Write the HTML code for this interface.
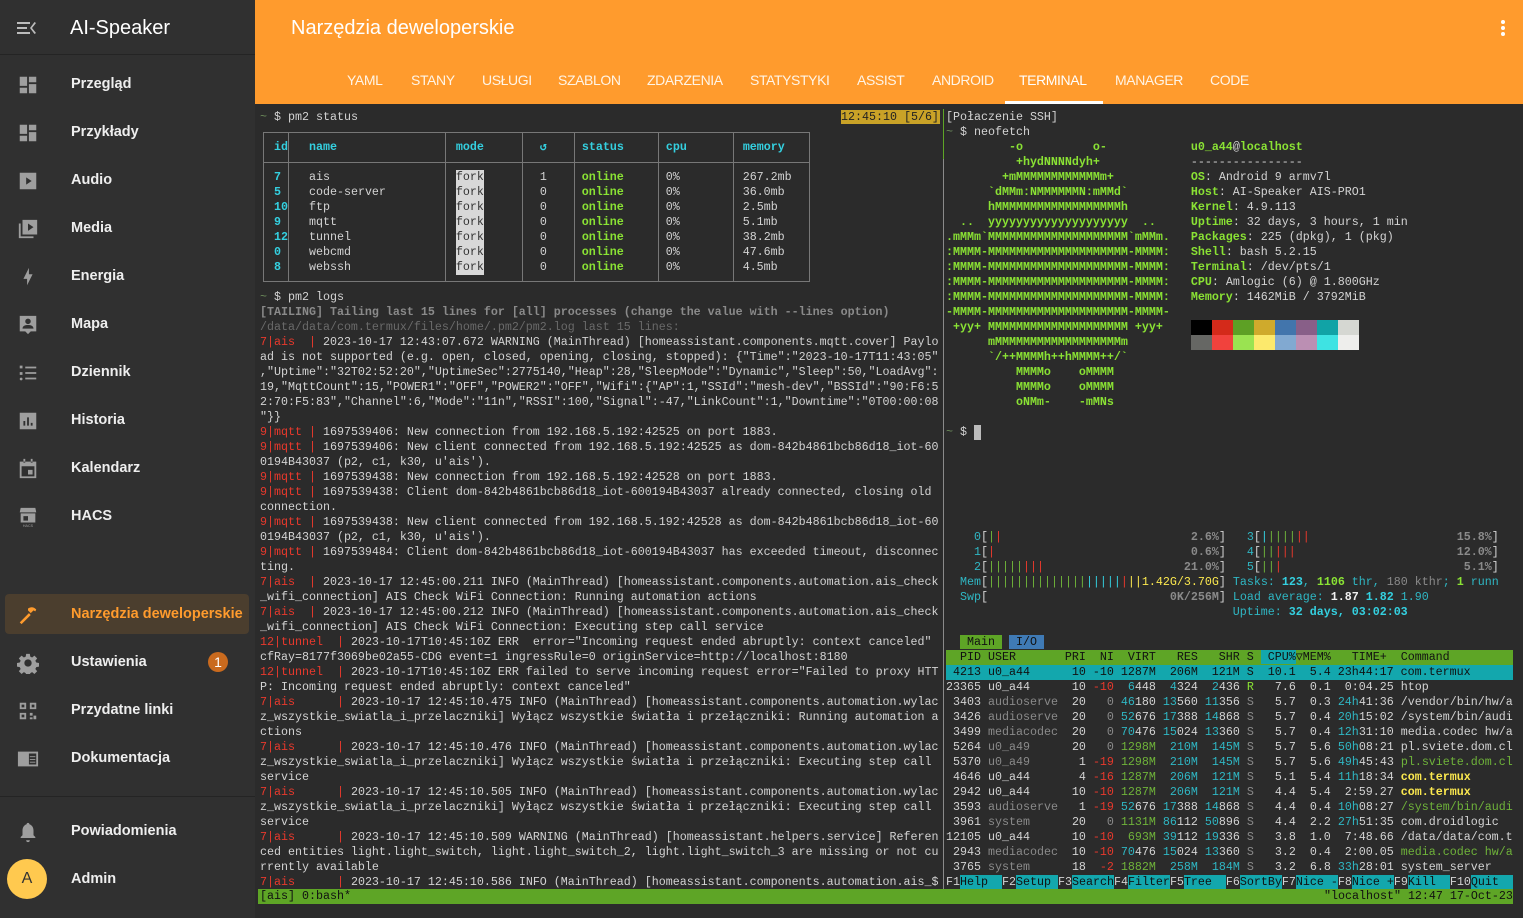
<!DOCTYPE html>
<html><head><meta charset="utf-8">
<style>
*{margin:0;padding:0;box-sizing:border-box}
body{width:1523px;height:918px;overflow:hidden;background:#2b2b2b;font-family:"Liberation Sans",sans-serif;position:relative}
#side{position:absolute;left:0;top:0;width:255px;height:918px;background:#303030}
.si{position:absolute;left:0;width:255px;height:48px}
.si svg{position:absolute;left:17px;top:14px;width:22px;height:22px;fill:#9e9e9e}
.si span{position:absolute;left:71px;top:16px;font-size:14.5px;font-weight:bold;color:#eee}
#hdr{position:absolute;left:255px;top:0;width:1268px;height:104px;background:#ff9b2d}
.tab{position:absolute;top:72px;font-size:14px;color:#fff4e6;letter-spacing:-0.4px}
pre{font-family:"Liberation Mono",monospace;font-size:11.67px;line-height:15px;color:#d3d3d3;position:absolute;white-space:pre;overflow:hidden}
.r{color:#e8392c}.g{color:#8ae234}.c{color:#34d0e0}.y{color:#fce94f;font-weight:bold}.d{color:#8a8a8a}.dd{color:#6a6a6a}.b{font-weight:bold}
.t{color:#6b8a5a}.w{color:#f0f0f0}.cy{color:#2fb7c4}.gr{color:#6fb33a}
.fork{display:inline-block;background:#d8d8d8;color:#333;height:15px}
.gb{background:#5ea526;color:#111}.cb{background:#13a7ad;color:#111}.bb{background:#3f7ab5;color:#111}
.full{display:inline-block;width:567px;height:15px;vertical-align:top}
</style></head><body>
<div id="side">
 <svg style="position:absolute;left:17px;top:20px" width="20" height="16" viewBox="0 0 20 16"><path d="M0 2h13v2H0zM0 7h10v2H0zM0 12h13v2H0zM19 3l-4 5 4 5-1.5 1L13 8l4.5-6z" fill="#bbb"/></svg>
 <div style="position:absolute;left:70px;top:17px;font-size:20px;color:#fff">AI-Speaker</div>
 <div style="position:absolute;left:0;top:54px;width:255px;height:1px;background:#242424"></div>
 <div class="si" style="top:60px"><svg viewBox="0 0 24 24"><path d="M3 3h8v10H3zM13 3h8v6h-8zM13 11h8v10h-8zM3 15h8v6H3z"/></svg><span>Przegląd</span></div>
 <div class="si" style="top:108px"><svg viewBox="0 0 24 24"><path d="M3 3h8v10H3zM13 3h8v6h-8zM13 11h8v10h-8zM3 15h8v6H3z"/></svg><span>Przykłady</span></div>
 <div class="si" style="top:156px"><svg viewBox="0 0 24 24"><path d="M3 3h18v18H3z M10 8v8l6-4z" fill-rule="evenodd"/></svg><span>Audio</span></div>
 <div class="si" style="top:204px"><svg viewBox="0 0 24 24"><path d="M2 6h2v14h14v2H2zM6 2h16v16H6zM12 6v8l6-4z" fill-rule="evenodd"/></svg><span>Media</span></div>
 <div class="si" style="top:252px"><svg viewBox="0 0 24 24"><path d="M11 21v-7H7l6-12v7h4z"/></svg><span>Energia</span></div>
 <div class="si" style="top:300px"><svg viewBox="0 0 24 24"><path d="M3 2h18v17h-6l-3 3-3-3H3zM12 5a3 3 0 100 6 3 3 0 000-6zM6 16h12c0-3-3-4-6-4s-6 1-6 4z" fill-rule="evenodd"/></svg><span>Mapa</span></div>
 <div class="si" style="top:348px"><svg viewBox="0 0 24 24"><path d="M3 4h3v3H3zM9 5h12v2H9zM3 11h3v3H3zM9 11h12v2H9zM4.5 17a1.5 1.5 0 110 3 1.5 1.5 0 010-3zM9 17h12v2H9z"/></svg><span>Dziennik</span></div>
 <div class="si" style="top:396px"><svg viewBox="0 0 24 24"><path d="M3 3h18v18H3zM7 12v5h2v-5zM11 8v9h2V8zM15 14v3h2v-3z" fill-rule="evenodd"/></svg><span>Historia</span></div>
 <div class="si" style="top:444px"><svg viewBox="0 0 24 24"><path d="M3 4h18v18H3zM5 9v11h14V9zM7 1h2v4H7zM15 1h2v4h-2zM12 13h5v5h-5z" fill-rule="evenodd"/></svg><span>Kalendarz</span></div>
 <div class="si" style="top:492px"><svg viewBox="0 0 24 24"><path d="M4 2h16l1 5H3zM4 8h16v10H4zM7 11v5h5v-5z" fill-rule="evenodd"/><text x="12" y="23" font-size="4" fill="#9e9e9e" text-anchor="middle" font-family="Liberation Sans">HACS</text></svg><span>HACS</span></div>
 <div style="position:absolute;left:5px;top:594px;width:244px;height:40px;background:#4b3e2e;border-radius:4px"></div>
 <div class="si" style="top:590px"><svg viewBox="0 0 24 24" style="fill:#ff9b2d"><path d="M3 20l10-10 2 2L5 22zM12 5c3-2 6-2 9 1l-1 2-2-1-3 3-3-3z"/></svg><span style="color:#ff9b2d">Narzędzia deweloperskie</span></div>
 <div class="si" style="top:638px"><svg viewBox="0 0 24 24"><path d="M12 8a4 4 0 100 8 4 4 0 000-8zM10 2h4l.5 3 2 1 2.5-2 3 3-2 2.5 1 2 3 .5v4l-3 .5-1 2 2 2.5-3 3-2.5-2-2 1-.5 3h-4l-.5-3-2-1-2.5 2-3-3 2-2.5-1-2-3-.5v-4l3-.5 1-2-2-2.5 3-3 2.5 2 2-1z" fill-rule="evenodd"/></svg><span>Ustawienia</span></div>
 <div style="position:absolute;left:208px;top:652px;width:20px;height:20px;border-radius:50%;background:#c96a1e;color:#fff;font-size:14px;text-align:center;line-height:20px">1</div>
 <div class="si" style="top:686px"><svg viewBox="0 0 24 24"><path d="M3 3h7v7H3zM5 5v3h3V5zM14 3h7v7h-7zM16 5v3h3V5zM3 14h7v7H3zM5 16v3h3v-3zM14 14h3v3h-3zM18 17h3v4h-3zM14 19h3v2h-3z" fill-rule="evenodd"/></svg><span>Przydatne linki</span></div>
 <div class="si" style="top:734px"><svg viewBox="0 0 24 24"><path d="M1 4h22v16H1zM13 6v12h8V6zM14 9h6v1h-6zM14 12h6v1h-6zM14 15h6v1h-6z" fill-rule="evenodd"/></svg><span>Dokumentacja</span></div>
 <div style="position:absolute;left:0;top:796px;width:255px;height:1px;background:#242424"></div>
 <div class="si" style="top:807px"><svg viewBox="0 0 24 24"><path d="M12 2c1 0 1.5.7 1.5 1.5 3 1 4.5 3.5 4.5 7v5l2 2v1H4v-1l2-2v-5c0-3.5 1.5-6 4.5-7C10.5 2.7 11 2 12 2zM10 21h4a2 2 0 01-4 0z"/></svg><span>Powiadomienia</span></div>
 <div style="position:absolute;left:7px;top:859px;width:40px;height:40px;border-radius:50%;background:#ffc94f;color:#333;font-size:16px;text-align:center;line-height:40px">A</div>
 <div class="si" style="top:855px"><span>Admin</span></div>
</div>
<div id="hdr">
 <div style="position:absolute;left:36px;top:17px;font-size:20px;color:#fff">Narzędzia deweloperskie</div>
 <div style="position:absolute;left:1246px;top:20px;width:4px;height:4px;background:#fff;border-radius:2px;box-shadow:0 6px #fff,0 12px #fff"></div>
 <div class="tab" style="left:92px">YAML</div>
 <div class="tab" style="left:156px">STANY</div>
 <div class="tab" style="left:227px">USŁUGI</div>
 <div class="tab" style="left:303px">SZABLON</div>
 <div class="tab" style="left:392px">ZDARZENIA</div>
 <div class="tab" style="left:495px">STATYSTYKI</div>
 <div class="tab" style="left:602px">ASSIST</div>
 <div class="tab" style="left:677px">ANDROID</div>
 <div class="tab" style="left:764px;color:#fff">TERMINAL</div>
 <div class="tab" style="left:860px">MANAGER</div>
 <div class="tab" style="left:955px">CODE</div>
 <div style="position:absolute;left:750px;top:101px;width:98px;height:3px;background:#fff"></div>
</div>

<div style="position:absolute;left:943px;top:109px;width:1px;height:780px;background:#8a8a8a"></div>
<div style="position:absolute;left:943px;top:109px;width:1px;height:50px;background:#5ea526"></div>

<!-- table -->
<div style="position:absolute;left:263px;top:132px;width:547px;height:150px;border:1px solid #777"></div>
<div style="position:absolute;left:263px;top:162px;width:547px;height:1px;background:#777"></div>
<div style="position:absolute;left:288px;top:132px;width:1px;height:150px;background:#777"></div>
<div style="position:absolute;left:445px;top:132px;width:1px;height:150px;background:#777"></div>
<div style="position:absolute;left:522px;top:132px;width:1px;height:150px;background:#777"></div>
<div style="position:absolute;left:574px;top:132px;width:1px;height:150px;background:#777"></div>
<div style="position:absolute;left:658px;top:132px;width:1px;height:150px;background:#777"></div>
<div style="position:absolute;left:733px;top:132px;width:1px;height:150px;background:#777"></div>

<div style="position:absolute;left:841px;top:110px;width:99px;height:14px;background:#c9a227"></div>
<pre style="left:841px;top:110px;color:#222">12:45:10 [5/6]</pre>

<pre style="left:260px;top:110px;width:683px;height:780px"><span class="t">~</span> $ pm2 status

  <span class="c b">id</span>   <span class="c b">name</span>                 <span class="c b">mode</span>        <span class="c b">↺</span>     <span class="c b">status</span>      <span class="c b">cpu</span>        <span class="c b">memory</span>

  <span class="c b">7</span>    ais                  <span class="fork">fork</span>        1     <span class="g b">online</span>      0%         267.2mb
  <span class="c b">5</span>    code-server          <span class="fork">fork</span>        0     <span class="g b">online</span>      0%         36.0mb
  <span class="c b">10</span>   ftp                  <span class="fork">fork</span>        0     <span class="g b">online</span>      0%         2.5mb
  <span class="c b">9</span>    mqtt                 <span class="fork">fork</span>        0     <span class="g b">online</span>      0%         5.1mb
  <span class="c b">12</span>   tunnel               <span class="fork">fork</span>        0     <span class="g b">online</span>      0%         38.2mb
  <span class="c b">0</span>    webcmd               <span class="fork">fork</span>        0     <span class="g b">online</span>      0%         47.6mb
  <span class="c b">8</span>    webssh               <span class="fork">fork</span>        0     <span class="g b">online</span>      0%         4.5mb

<span class="t">~</span> $ pm2 logs
<span class="d b">[TAILING] Tailing last 15 lines for [all] processes (change the value with --lines option)</span>
<span class="dd">/data/data/com.termux/files/home/.pm2/pm2.log last 15 lines:</span>
<span class="r">7|ais  |</span> 2023-10-17 12:43:07.672 WARNING (MainThread) [homeassistant.components.mqtt.cover] Paylo
ad is not supported (e.g. open, closed, opening, closing, stopped): {"Time":"2023-10-17T11:43:05"
,"Uptime":"32T02:52:20","UptimeSec":2775140,"Heap":28,"SleepMode":"Dynamic","Sleep":50,"LoadAvg":
19,"MqttCount":15,"POWER1":"OFF","POWER2":"OFF","Wifi":{"AP":1,"SSId":"mesh-dev","BSSId":"90:F6:5
2:70:F5:83","Channel":6,"Mode":"11n","RSSI":100,"Signal":-47,"LinkCount":1,"Downtime":"0T00:00:08
"}}
<span class="r">9|mqtt |</span> 1697539406: New connection from 192.168.5.192:42525 on port 1883.
<span class="r">9|mqtt |</span> 1697539406: New client connected from 192.168.5.192:42525 as dom-842b4861bcb86d18_iot-60
0194B43037 (p2, c1, k30, u'ais').
<span class="r">9|mqtt |</span> 1697539438: New connection from 192.168.5.192:42528 on port 1883.
<span class="r">9|mqtt |</span> 1697539438: Client dom-842b4861bcb86d18_iot-600194B43037 already connected, closing old
connection.
<span class="r">9|mqtt |</span> 1697539438: New client connected from 192.168.5.192:42528 as dom-842b4861bcb86d18_iot-60
0194B43037 (p2, c1, k30, u'ais').
<span class="r">9|mqtt |</span> 1697539484: Client dom-842b4861bcb86d18_iot-600194B43037 has exceeded timeout, disconnec
ting.
<span class="r">7|ais  |</span> 2023-10-17 12:45:00.211 INFO (MainThread) [homeassistant.components.automation.ais_check
_wifi_connection] AIS Check WiFi Connection: Running automation actions
<span class="r">7|ais  |</span> 2023-10-17 12:45:00.212 INFO (MainThread) [homeassistant.components.automation.ais_check
_wifi_connection] AIS Check WiFi Connection: Executing step call service
<span class="r">12|tunnel  |</span> 2023-10-17T10:45:10Z ERR  error="Incoming request ended abruptly: context canceled"
cfRay=8177f3069be02a55-CDG event=1 ingressRule=0 originService=http://localhost:8180
<span class="r">12|tunnel  |</span> 2023-10-17T10:45:10Z ERR failed to serve incoming request error="Failed to proxy HTT
P: Incoming request ended abruptly: context canceled"
<span class="r">7|ais      |</span> 2023-10-17 12:45:10.475 INFO (MainThread) [homeassistant.components.automation.wylac
z_wszystkie_swiatla_i_przelaczniki] Wyłącz wszystkie światła i przełączniki: Running automation a
ctions
<span class="r">7|ais      |</span> 2023-10-17 12:45:10.476 INFO (MainThread) [homeassistant.components.automation.wylac
z_wszystkie_swiatla_i_przelaczniki] Wyłącz wszystkie światła i przełączniki: Executing step call
service
<span class="r">7|ais      |</span> 2023-10-17 12:45:10.505 INFO (MainThread) [homeassistant.components.automation.wylac
z_wszystkie_swiatla_i_przelaczniki] Wyłącz wszystkie światła i przełączniki: Executing step call
service
<span class="r">7|ais      |</span> 2023-10-17 12:45:10.509 WARNING (MainThread) [homeassistant.helpers.service] Referen
ced entities light.light_switch, light.light_switch_2, light.light_switch_3 are missing or not cu
rrently available
<span class="r">7|ais      |</span> 2023-10-17 12:45:10.586 INFO (MainThread) [homeassistant.components.automation.ais_$</pre>

<!-- color blocks -->
<div style="position:absolute;left:1191px;top:320px;display:flex">
<div style="width:21px;height:15px;background:#000"></div><div style="width:21px;height:15px;background:#d42a1a"></div><div style="width:21px;height:15px;background:#5da025"></div><div style="width:21px;height:15px;background:#cfaa2c"></div><div style="width:21px;height:15px;background:#4275ac"></div><div style="width:21px;height:15px;background:#885f88"></div><div style="width:21px;height:15px;background:#11a3a6"></div><div style="width:21px;height:15px;background:#d5d7d2"></div></div>
<div style="position:absolute;left:1191px;top:335px;display:flex">
<div style="width:21px;height:15px;background:#666764"></div><div style="width:21px;height:15px;background:#f1423d"></div><div style="width:21px;height:15px;background:#9ae351"></div><div style="width:21px;height:15px;background:#fce96c"></div><div style="width:21px;height:15px;background:#81a9d1"></div><div style="width:21px;height:15px;background:#bb8fb3"></div><div style="width:21px;height:15px;background:#3ee3e3"></div><div style="width:21px;height:15px;background:#eeeeec"></div></div>

<div style="position:absolute;left:974px;top:425px;width:7px;height:15px;background:#bbb"></div>

<pre style="left:946px;top:110px;width:577px;height:780px">[Połaczenie SSH]
<span class="t">~</span> $ neofetch
<span class="g b">         -o          o-            </span><span class="g b">u0_a44</span>@<span class="g b">localhost</span>
<span class="g b">          +hydNNNNdyh+             </span>----------------
<span class="g b">        +mMMMMMMMMMMMMm+           </span><span class="g b">OS</span>: Android 9 armv7l
<span class="g b">      `dMMm:NMMMMMMN:mMMd`         </span><span class="g b">Host</span>: AI-Speaker AIS-PRO1
<span class="g b">      hMMMMMMMMMMMMMMMMMMh         </span><span class="g b">Kernel</span>: 4.9.113
<span class="g b">  ..  yyyyyyyyyyyyyyyyyyyy  ..     </span><span class="g b">Uptime</span>: 32 days, 3 hours, 1 min
<span class="g b">.mMMm`MMMMMMMMMMMMMMMMMMMM`mMMm.   </span><span class="g b">Packages</span>: 225 (dpkg), 1 (pkg)
<span class="g b">:MMMM-MMMMMMMMMMMMMMMMMMMM-MMMM:   </span><span class="g b">Shell</span>: bash 5.2.15
<span class="g b">:MMMM-MMMMMMMMMMMMMMMMMMMM-MMMM:   </span><span class="g b">Terminal</span>: /dev/pts/1
<span class="g b">:MMMM-MMMMMMMMMMMMMMMMMMMM-MMMM:   </span><span class="g b">CPU</span>: Amlogic (6) @ 1.800GHz
<span class="g b">:MMMM-MMMMMMMMMMMMMMMMMMMM-MMMM:   </span><span class="g b">Memory</span>: 1462MiB / 3792MiB
<span class="g b">-MMMM-MMMMMMMMMMMMMMMMMMMM-MMMM-</span>
<span class="g b"> +yy+ MMMMMMMMMMMMMMMMMMMM +yy+</span>
<span class="g b">      mMMMMMMMMMMMMMMMMMMm</span>
<span class="g b">      `/++MMMMh++hMMMM++/`</span>
<span class="g b">          MMMMo    oMMMM</span>
<span class="g b">          MMMMo    oMMMM</span>
<span class="g b">          oNMm-    -mMNs</span>

<span class="t">~</span> $






    <span class="cy">0</span>[<span class="gr">|</span><span class="r">|</span>                           <span class="d b">2.6%</span>]   <span class="cy">3</span>[<span class="c">|</span><span class="gr">||||</span><span class="r">||</span>                     <span class="d b">15.8%</span>]
    <span class="cy">1</span>[<span class="r">|</span>                            <span class="d b">0.6%</span>]   <span class="cy">4</span>[<span class="gr">||</span><span class="r">|||</span>                       <span class="d b">12.0%</span>]
    <span class="cy">2</span>[<span class="gr">|||||</span><span class="r">|||</span>                    <span class="d b">21.0%</span>]   <span class="cy">5</span>[<span class="gr">||</span><span class="r">|</span>                          <span class="d b">5.1%</span>]
  <span class="cy">Mem</span>[<span class="gr">||||||||||||||</span><span class="c">|||||</span><span class="r">|</span><span class="y" style="font-weight:normal">||1.42G/3.70G</span>] <span class="cy">Tasks: </span><span class="c b">123</span><span class="cy">, </span><span class="g b">1106</span><span class="cy"> thr, </span><span class="d">180 kthr</span><span class="cy">; </span><span class="g b">1</span><span class="cy"> runn</span>
  <span class="cy">Swp</span>[                          <span class="d b">0K/256M</span>] <span class="cy">Load average: </span><span class="w b">1.87 </span><span class="c b">1.82 </span><span class="cy">1.90</span>
                                         <span class="cy">Uptime: </span><span class="c b">32 days, 03:02:03</span>

  <span class="gb"> Main </span> <span class="bb"> I/O </span>
<span class="full gb">  PID USER       PRI  NI  VIRT   RES   SHR S <span class="cb"> CPU%</span>▽MEM%   TIME+  Command</span>
<span class="full cb"> 4213 u0_a44      10 -10 1287M  206M  121M S  10.1  5.4 23h44:17 com.termux</span>
23365 u0_a44      10 <span class="r">-10</span>  <span class="cy">6</span>448  <span class="cy">4</span>324  <span class="cy">2</span>436 <span class="g">R</span>   7.6  0.1  0:04.25 htop
 3403 <span class="d">audioserve</span>  20   <span class="d">0</span> <span class="cy">46</span>180 <span class="cy">13</span>560 <span class="cy">11</span>356 <span class="d">S</span>   5.7  0.3 <span class="cy">24h</span>41:36 /vendor/bin/hw/a
 3426 <span class="d">audioserve</span>  20   <span class="d">0</span> <span class="cy">52</span>676 <span class="cy">17</span>388 <span class="cy">14</span>868 <span class="d">S</span>   5.7  0.4 <span class="cy">20h</span>15:02 /system/bin/audi
 3499 <span class="d">mediacodec</span>  20   <span class="d">0</span> <span class="cy">70</span>476 <span class="cy">15</span>024 <span class="cy">13</span>360 <span class="d">S</span>   5.7  0.4 <span class="cy">12h</span>31:10 media.codec hw/a
 5264 <span class="d">u0_a49</span>      20   <span class="d">0</span> <span class="gr">1298M</span>  <span class="cy">210M</span>  <span class="cy">145M</span> <span class="d">S</span>   5.7  5.6 <span class="cy">50h</span>08:21 pl.sviete.dom.cl
 5370 <span class="d">u0_a49</span>       1 <span class="r">-19</span> <span class="gr">1298M</span>  <span class="cy">210M</span>  <span class="cy">145M</span> <span class="d">S</span>   5.7  5.6 <span class="cy">49h</span>45:43 <span class="gr">pl.sviete.dom.cl</span>
 4646 u0_a44       4 <span class="r">-16</span> <span class="gr">1287M</span>  <span class="cy">206M</span>  <span class="cy">121M</span> <span class="d">S</span>   5.1  5.4 <span class="cy">11h</span>18:34 <span class="y">com.termux</span>
 2942 u0_a44      10 <span class="r">-10</span> <span class="gr">1287M</span>  <span class="cy">206M</span>  <span class="cy">121M</span> <span class="d">S</span>   4.4  5.4  2:59.27 <span class="y">com.termux</span>
 3593 <span class="d">audioserve</span>   1 <span class="r">-19</span> <span class="cy">52</span>676 <span class="cy">17</span>388 <span class="cy">14</span>868 <span class="d">S</span>   4.4  0.4 <span class="cy">10h</span>08:27 <span class="gr">/system/bin/audi</span>
 3961 <span class="d">system</span>      20   <span class="d">0</span> <span class="gr">1131M</span> <span class="cy">86</span>112 <span class="cy">50</span>896 <span class="d">S</span>   4.4  2.2 <span class="cy">27h</span>51:35 com.droidlogic
12105 u0_a44      10 <span class="r">-10</span>  <span class="gr">693M</span> <span class="cy">39</span>112 <span class="cy">19</span>336 <span class="d">S</span>   3.8  1.0  7:48.66 /data/data/com.t
 2943 <span class="d">mediacodec</span>  10 <span class="r">-10</span> <span class="cy">70</span>476 <span class="cy">15</span>024 <span class="cy">13</span>360 <span class="d">S</span>   3.2  0.4  2:00.05 <span class="gr">media.codec hw/a</span>
 3765 <span class="d">system</span>      18  <span class="r">-2</span> <span class="gr">1882M</span>  <span class="cy">258M</span>  <span class="cy">184M</span> <span class="d">S</span>   3.2  6.8 <span class="cy">33h</span>28:01 system_server
F1<span class="cb">Help  </span>F2<span class="cb">Setup </span>F3<span class="cb">Search</span>F4<span class="cb">Filter</span>F5<span class="cb">Tree  </span>F6<span class="cb">SortBy</span>F7<span class="cb">Nice -</span>F8<span class="cb">Nice +</span>F9<span class="cb">Kill  </span>F10<span class="cb">Quit  </span></pre>

<div style="position:absolute;left:258px;top:889px;width:1255px;height:15px;background:#5ea526"></div>
<pre style="left:260px;top:889px;color:#111">[ais] 0:bash*</pre>
<pre style="left:1324px;top:889px;color:#111">"localhost" 12:47 17-Oct-23</pre>
</body></html>
